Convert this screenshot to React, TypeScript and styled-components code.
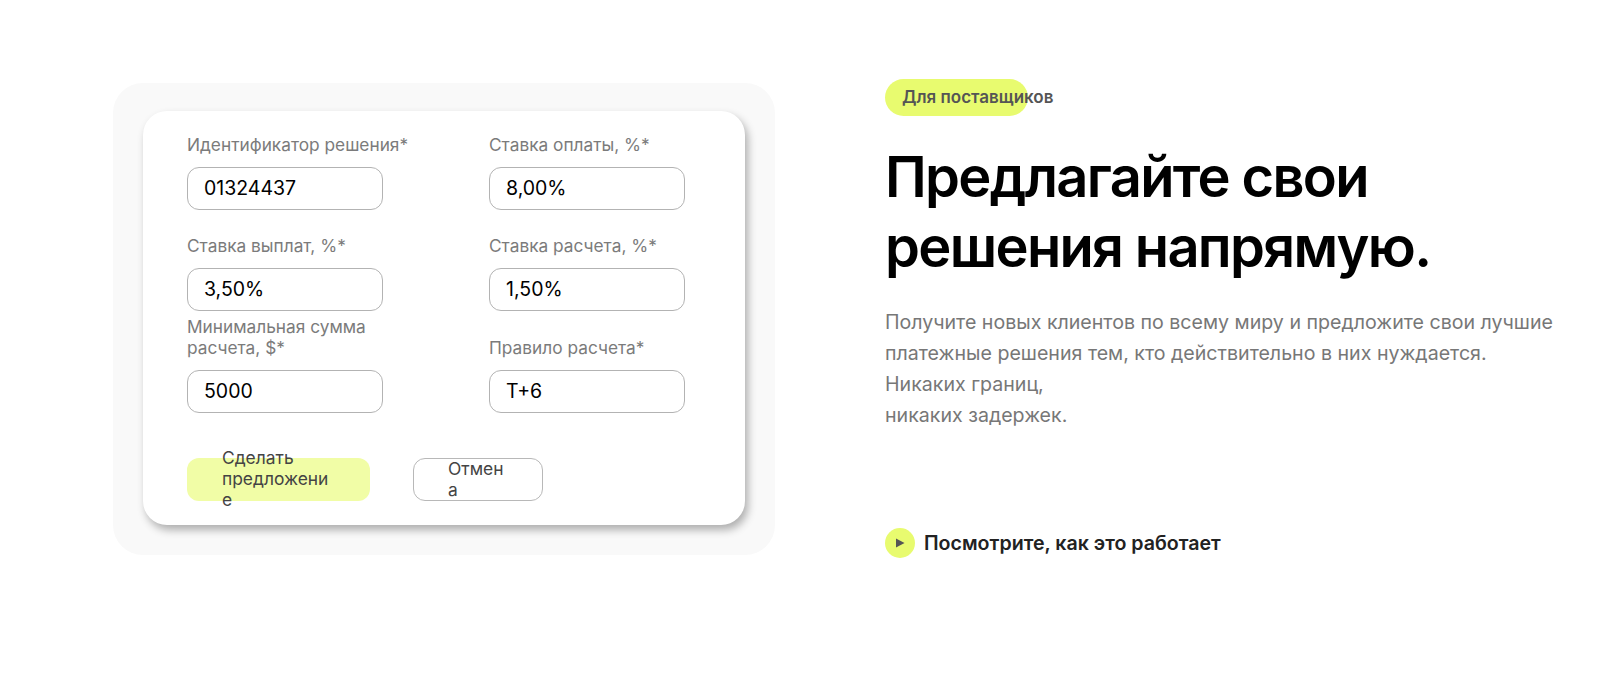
import React from "react";
import styled, { createGlobalStyle } from "styled-components";

const GlobalStyle = createGlobalStyle`
  * { box-sizing: border-box; }
  html, body { margin: 0; padding: 0; background: #fff; }
  body { font-family: Inter, "Noto Sans", sans-serif; }
`;

const Page = styled.main`
  width: 1620px;
  height: 696px;
  display: flex;
  align-items: flex-start;
  padding: 79px 0 0 113px;
  overflow: hidden;
`;

const Panel = styled.section`
  width: 662px;
  height: 472px;
  flex-shrink: 0;
  margin-top: 4px;
  padding: 28px 30px;
  background: #f9f9f9;
  border-radius: 30px;
`;

const Card = styled.form`
  height: 414px;
  padding: 21px 44px 0;
  background: #fff;
  border-radius: 24px;
  box-shadow: 3px 5px 8px rgba(0, 0, 0, 0.3);
`;

const FieldGrid = styled.div`
  display: grid;
  grid-template-columns: 302px 196px;
`;

const Field = styled.label<{ $height: number }>`
  display: flex;
  flex-direction: column;
  justify-content: flex-end;
  height: ${(p) => p.$height}px;
`;

const FieldName = styled.span`
  display: block;
  max-width: 240px;
  margin-bottom: 12px;
  font-size: 17.3px;
  line-height: 21px;
  color: #7b7b7b;
`;

const TextBox = styled.input`
  display: block;
  width: 196px;
  height: 43px;
  padding: 0 16px 1px;
  border: 1px solid #b3b3b3;
  border-radius: 12px;
  background: #fff;
  font: 400 19.5px Inter, sans-serif;
  color: #000;
  outline: none;
`;

const Actions = styled.div`
  display: flex;
  gap: 43px;
  margin-top: 45px;
`;

const ActionButton = styled.button<{ $primary?: boolean; $width: number }>`
  width: ${(p) => p.$width}px;
  height: 43px;
  padding: 0 ${(p) => (p.$primary ? 35 : 34)}px 2px;
  display: flex;
  align-items: center;
  border: ${(p) => (p.$primary ? "none" : "1px solid #b8b8b8")};
  border-radius: 12px;
  background: ${(p) => (p.$primary ? "#f1fda6" : "#fff")};
  font: 400 17.4px/21px Inter, sans-serif;
  color: #444;
  text-align: left;
  overflow-wrap: anywhere;
`;

const Copy = styled.section`
  margin-left: 110px;
  width: 690px;
`;

const Badge = styled.div`
  width: 143px;
  height: 37px;
  padding-left: 17px;
  border-radius: 19px;
  background: #e8fb6f;
  font-size: 17px;
  font-weight: 600;
  line-height: 36px;
  color: #555;
  white-space: nowrap;
`;

const Title = styled.h1`
  margin: 26px 0 0;
  font-size: 56px;
  font-weight: 600;
  line-height: 70px;
  letter-spacing: -1.68px;
  color: #000;
`;

const Lead = styled.p`
  margin: 25px 0 0;
  font-size: 19.6px;
  line-height: 31px;
  color: #777;
`;

const WatchLink = styled.a`
  display: flex;
  align-items: center;
  gap: 9px;
  margin-top: 97px;
  font-size: 19.6px;
  font-weight: 600;
  color: #222;
  text-decoration: none;
`;

const PlayDot = styled.span`
  width: 30px;
  height: 30px;
  display: flex;
  align-items: center;
  justify-content: center;
  border-radius: 50%;
  background: #e8fb6f;
`;

const fields = [
  { name: "Идентификатор решения*", value: "01324437", height: 78 },
  { name: "Ставка оплаты, %*", value: "8,00%", height: 78 },
  { name: "Ставка выплат, %*", value: "3,50%", height: 101 },
  { name: "Ставка расчета, %*", value: "1,50%", height: 101 },
  { name: "Минимальная сумма расчета, $*", value: "5000", height: 102 },
  { name: "Правило расчета*", value: "T+6", height: 102 },
];

const App = () => {
  return (
    <Page>
      <GlobalStyle />
      <Panel>
        <Card>
          <FieldGrid>
            {fields.map((f) => (
              <Field key={f.name} $height={f.height}>
                <FieldName>{f.name}</FieldName>
                <TextBox defaultValue={f.value} readOnly />
              </Field>
            ))}
          </FieldGrid>
          <Actions>
            <ActionButton type="button" $primary $width={183}>Сделать предложение</ActionButton>
            <ActionButton type="button" $width={130}>Отмена</ActionButton>
          </Actions>
        </Card>
      </Panel>
      <Copy>
        <Badge>Для поставщиков</Badge>
        <Title>
          Предлагайте свои
          <br />
          решения напрямую.
        </Title>
        <Lead>
          Получите новых клиентов по всему миру и предложите свои лучшие
          <br />
          платежные решения тем, кто действительно в них нуждается.
          <br />
          Никаких границ,
          <br />
          никаких задержек.
        </Lead>
        <WatchLink href="#">
          <PlayDot>
            <svg width="10" height="10" viewBox="0 0 10 10">
              <path d="M1 0.5L9.5 5L1 9.5Z" fill="#555" />
            </svg>
          </PlayDot>
          Посмотрите, как это работает
        </WatchLink>
      </Copy>
    </Page>
  );
};

export default App;
